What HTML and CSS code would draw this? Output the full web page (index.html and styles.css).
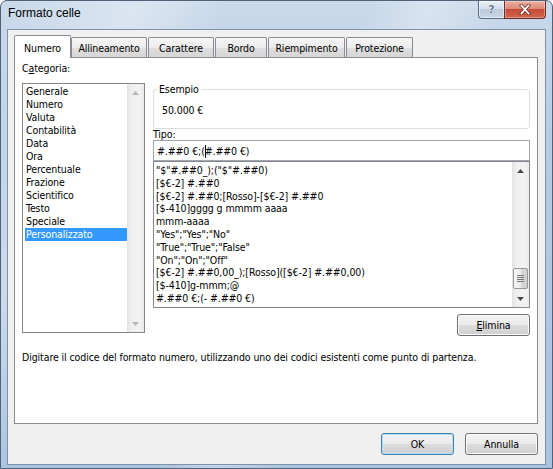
FILE: index.html
```html
<!DOCTYPE html>
<html lang="it">
<head>
<meta charset="utf-8">
<title>Formato celle</title>
<link rel="stylesheet" href="styles.css">
</head>
<body>
<div class="window">
  <div class="titlebar">
    <div class="title">Formato celle</div>
    <div class="caption">
      <div class="cap-btn cap-help"><span class="help-glyph">?</span></div>
      <div class="cap-btn cap-close">
        <svg class="x-icon" width="14" height="11" viewBox="0 0 14 11">
          <path class="x-shadow" d="M3.5 1.5 L10.5 9.5 M10.5 1.5 L3.5 9.5"/>
          <path class="x-main" d="M3.5 1.5 L10.5 9.5 M10.5 1.5 L3.5 9.5"/>
        </svg>
      </div>
    </div>
  </div>
  <div class="client">
    <div class="tabs">
      <div class="tab tab-active w-numero">Numero</div>
      <div class="tab w-allineamento">Allineamento</div>
      <div class="tab w-carattere">Carattere</div>
      <div class="tab w-bordo">Bordo</div>
      <div class="tab w-riempimento">Riempimento</div>
      <div class="tab w-protezione">Protezione</div>
    </div>
    <div class="panel">
      <div class="panel-main">
        <div class="col-left">
          <div class="label label-cat">C<u>a</u>tegoria:</div>
          <div class="listbox list-cat">
            <ul class="items items-cat">
              <li>Generale</li>
              <li>Numero</li>
              <li>Valuta</li>
              <li>Contabilità</li>
              <li>Data</li>
              <li>Ora</li>
              <li>Percentuale</li>
              <li>Frazione</li>
              <li>Scientifico</li>
              <li>Testo</li>
              <li>Speciale</li>
              <li class="selected">Personalizzato</li>
            </ul>
            <div class="vscroll vscroll-disabled">
              <div class="sb-arrow"><svg width="7" height="4" viewBox="0 0 7 4"><path d="M0 4 L3.5 0 L7 4 Z"/></svg></div>
              <div class="sb-track"></div>
              <div class="sb-arrow"><svg width="7" height="4" viewBox="0 0 7 4"><path d="M0 0 L7 0 L3.5 4 Z"/></svg></div>
            </div>
          </div>
        </div>
        <div class="col-right">
          <fieldset class="group">
            <legend>Esempio</legend>
            <div class="sample">50.000 €</div>
          </fieldset>
          <div class="label label-tipo">Tipo:</div>
          <div class="textbox">#.##0 €;(<span class="caret"></span>#.##0 €)</div>
          <div class="listbox list-fmt">
            <ul class="items items-fmt">
              <li>"$"#.##0_);("$"#.##0)</li>
              <li>[$€-2] #.##0</li>
              <li>[$€-2] #.##0;[Rosso]-[$€-2] #.##0</li>
              <li>[$-410]gggg g mmmm aaaa</li>
              <li>mmm-aaaa</li>
              <li>"Yes";"Yes";"No"</li>
              <li>"True";"True";"False"</li>
              <li>"On";"On";"Off"</li>
              <li>[$€-2] #.##0,00_);[Rosso]([$€-2] #.##0,00)</li>
              <li>[$-410]g-mmm;@</li>
              <li>#.##0 €;(- #.##0 €)</li>
            </ul>
            <div class="vscroll">
              <div class="sb-arrow"><svg width="7" height="4" viewBox="0 0 7 4"><path d="M0 4 L3.5 0 L7 4 Z"/></svg></div>
              <div class="sb-track">
                <div class="sb-thumb">
                  <svg width="7" height="7" viewBox="0 0 7 7"><path d="M0 0.5 H7 M0 2.5 H7 M0 4.5 H7 M0 6.5 H7"/></svg>
                </div>
              </div>
              <div class="sb-arrow"><svg width="7" height="4" viewBox="0 0 7 4"><path d="M0 0 L7 0 L3.5 4 Z"/></svg></div>
            </div>
          </div>
          <div class="btn-row"><button class="btn"><u>E</u>limina</button></div>
        </div>
      </div>
      <div class="desc">Digitare il codice del formato numero, utilizzando uno dei codici esistenti come punto di partenza.</div>
    </div>
    <div class="footer">
      <button class="btn btn-default">OK</button>
      <button class="btn">Annulla</button>
    </div>
  </div>
</div>
</body>
</html>
```

FILE: styles.css
```css
* { box-sizing: border-box; }

html, body {
  margin: 0;
  padding: 0;
}

body {
  width: 553px;
  height: 469px;
  overflow: hidden;
  font-family: "DejaVu Sans Condensed", "DejaVu Sans", sans-serif;
  font-stretch: condensed;
  font-size: 10.5px;
  letter-spacing: -0.1px;
  color: #000;
  background: #ffffff;
}

.window {
  width: 553px;
  height: 469px;
  display: flex;
  flex-direction: column;
  border: 1px solid #4f6279;
  border-radius: 7px 7px 0 0;
  padding: 0 6px 3px 6px;
  background:
    linear-gradient(115deg, rgba(255,255,255,0) 0%, rgba(255,255,255,0.35) 18%, rgba(255,255,255,0) 30%, rgba(255,255,255,0) 48%, rgba(255,255,255,0.3) 56%, rgba(255,255,255,0) 66%),
    linear-gradient(#c9d9ea, #b6cce3 30%, #a9c2dd);
}

.titlebar {
  height: 28px;
  display: flex;
  align-items: flex-start;
  padding-left: 1px;
}

.title {
  margin-top: 5px;
  font-family: "Liberation Sans", Arial, sans-serif;
  font-stretch: normal;
  font-size: 12px;
  line-height: 15px;
  letter-spacing: 0;
  color: #000;
}

.caption {
  margin-left: auto;
  display: flex;
}

.cap-btn {
  height: 18px;
  display: flex;
  align-items: center;
  justify-content: center;
}

.cap-help {
  width: 26px;
  border: 1px solid #5b6d84;
  border-top: none;
  border-right: none;
  border-radius: 0 0 0 4px;
  background: linear-gradient(#e9eff6, #d4dfeb 45%, #bccbdd 50%, #c9d7e7);
  box-shadow: inset 0 0 0 1px rgba(255,255,255,0.5);
}

.help-glyph {
  font-family: "DejaVu Sans", sans-serif;
  font-stretch: normal;
  font-weight: bold;
  font-size: 11px;
  line-height: 12px;
  color: #6f7c8c;
  text-shadow: 0 0 1px #ffffff, 0 0 1px #ffffff;
}

.cap-close {
  width: 42px;
  border: 1px solid #6d2a22;
  border-top: none;
  border-radius: 0 0 4px 0;
  background: linear-gradient(#eab0a3, #dd8a78 45%, #c84b38 50%, #d0644c);
  box-shadow: inset 0 0 0 1px rgba(255,255,255,0.35);
}

.x-icon path {
  fill: none;
  stroke-linecap: square;
}

.x-shadow {
  stroke: #6b2d26;
  stroke-width: 3.4;
}

.x-main {
  stroke: #ffffff;
  stroke-width: 1.8;
}

.client {
  flex: 1;
  display: flex;
  flex-direction: column;
  background: #f0f0f0;
  border: 1px solid #7e93ab;
}

/* tabs */
.tabs {
  height: 27px;
  display: flex;
  align-items: flex-end;
  padding-left: 6px;
}

.tab {
  height: 20px;
  margin-left: 1px;
  padding-top: 2px;
  line-height: 17px;
  text-align: center;
  white-space: nowrap;
  border: 1px solid #898c95;
  border-bottom: none;
  border-radius: 2px 2px 0 0;
  background: linear-gradient(#f6f6f6, #ececec 50%, #dfdfdf 51%, #d6d6d6);
}

.tab-active {
  position: relative;
  z-index: 1;
  height: 23px;
  margin-left: 0;
  margin-bottom: -1px;
  padding-top: 4px;
  padding-bottom: 1px;
  background: #ffffff;
}

.w-numero { width: 57px; }
.w-allineamento { width: 76px; margin-left: 0; }
.w-carattere { width: 66px; }
.w-bordo { width: 52px; }
.w-riempimento { width: 77px; }
.w-protezione { width: 67px; }

/* panel */
.panel {
  flex: 1;
  margin: 0 7px 0 6px;
  display: flex;
  flex-direction: column;
  background: #ffffff;
  border: 1px solid #898c95;
}

.panel-main {
  display: flex;
  gap: 8px;
  padding: 0 7px;
}

.col-left {
  width: 123px;
  flex: none;
}

.col-right {
  flex: 1;
  min-width: 0;
  padding-top: 25px;
}

.label {
  line-height: 13px;
  white-space: nowrap;
}

.label-cat {
  margin-top: 4px;
}

.label-tipo {
  line-height: 11px;
}

/* listboxes */
.listbox {
  display: flex;
  border: 1px solid #828790;
  background: #ffffff;
  overflow: hidden;
}

.list-cat {
  margin-top: 8px;
  height: 250px;
}

.list-fmt {
  height: 147px;
}

.items {
  flex: 1;
  min-width: 0;
  list-style: none;
  margin: 0;
  overflow: hidden;
}

.items li {
  line-height: 13px;
  padding-left: 1px;
  white-space: nowrap;
}

.items-cat {
  padding: 1px 0 0 2px;
}

.items-fmt {
  padding: 2px 0 0 1px;
}

.items-fmt li {
  line-height: 12.8px;
}

.items .selected {
  background: #3399ff;
  color: #ffffff;
}

/* scrollbars */
.vscroll {
  width: 17px;
  flex: none;
  display: flex;
  flex-direction: column;
  background: linear-gradient(to right, #e2e2e2, #efefef 25%, #f2f2f2 75%, #e9e9e9);
}

.sb-arrow {
  height: 17px;
  display: flex;
  align-items: center;
  justify-content: center;
}

.sb-arrow path {
  fill: #4a4a4a;
}

.vscroll-disabled .sb-arrow path {
  fill: #b7b7b7;
}

.sb-track {
  flex: 1;
  display: flex;
  flex-direction: column;
  justify-content: flex-end;
  padding: 0 1px 1px;
}

.sb-thumb {
  height: 21px;
  display: flex;
  align-items: center;
  justify-content: center;
  border: 1px solid #979797;
  border-radius: 2px;
  background: linear-gradient(to right, #f7f7f7, #ececec 50%, #dcdcdc 51%, #cfcfcf);
}

.sb-thumb path {
  stroke: #777777;
  stroke-width: 1;
  fill: none;
}

/* sample group */
.group {
  margin: 0;
  min-width: 0;
  padding: 8px 0 11px 3px;
  border: 1px solid #d5dfe5;
  border-radius: 3px;
}

.group legend {
  padding: 0 2px;
  line-height: 13px;
}

.sample {
  margin-left: 5px;
  line-height: 13px;
}

/* type field */
.textbox {
  height: 21px;
  padding: 4px 3px 0 3px;
  line-height: 13px;
  white-space: nowrap;
  border: 1px solid #a3a6ad;
  background: #ffffff;
}

.caret {
  display: inline-block;
  width: 1px;
  height: 13px;
  margin: 0 -1px 0 0;
  vertical-align: top;
  background: #000000;
}

.btn-row {
  display: flex;
  justify-content: flex-end;
  margin-top: 6px;
}

.btn {
  width: 73px;
  height: 22px;
  padding: 0;
  font-family: inherit;
  font-stretch: condensed;
  font-size: 10.5px;
  letter-spacing: -0.1px;
  color: #000000;
  border: 1px solid #707070;
  border-radius: 3px;
  background: linear-gradient(#f2f2f2, #ebebeb 50%, #dddddd 51%, #cfcfcf);
  box-shadow: inset 0 0 0 1px #fbfbfb;
}

.btn-default {
  border-color: #3c7fb1;
  box-shadow: inset 0 0 0 1px #b7e2f6;
}

.desc {
  margin-top: 15px;
  padding-left: 7px;
  line-height: 13px;
  white-space: nowrap;
}

.footer {
  display: flex;
  justify-content: flex-end;
  gap: 11px;
  padding: 9px 7px 9px 0;
}
```
